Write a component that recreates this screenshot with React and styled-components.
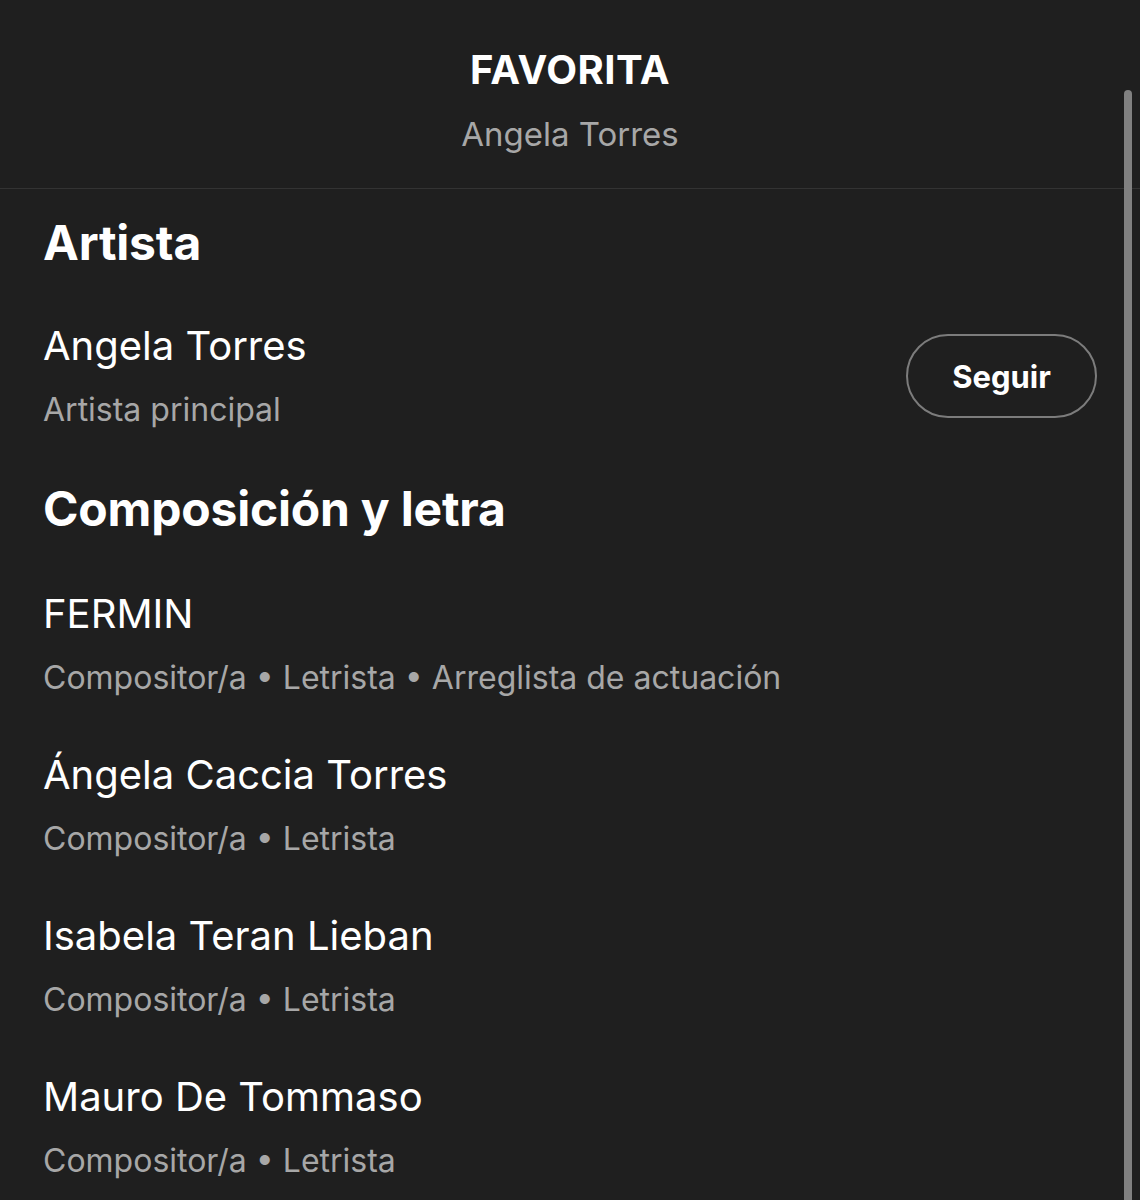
import React from "react";
import styled, { createGlobalStyle } from "styled-components";

const GlobalStyle = createGlobalStyle`
  body {
    margin: 0;
    background: #1f1f1f;
    font-family: Inter, "Noto Sans", sans-serif;
    color: #ffffff;
  }
`;

const Page = styled.div`
  position: relative;
  min-height: 1200px;
  background: #1f1f1f;
  overflow: hidden;
`;

const Header = styled.header`
  display: flex;
  flex-direction: column;
  align-items: center;
  padding: 46px 0 34px;
  border-bottom: 1px solid #333333;
`;

const Title = styled.h1`
  margin: 0;
  font-size: 40px;
  line-height: 48px;
  font-weight: 700;
  letter-spacing: 0.5px;
`;

const Subtitle = styled.div`
  margin-top: 20px;
  font-size: 33px;
  line-height: 40px;
  color: #a7a7a7;
`;

const Content = styled.main`
  display: flex;
  flex-direction: column;
  padding: 25px 43px 0;
`;

const SectionTitle = styled.h2`
  margin: 0 0 ${(p) => p.$gap}px;
  font-size: 48px;
  line-height: 58px;
  font-weight: 700;
  letter-spacing: -0.2px;
`;

const List = styled.div`
  display: flex;
  flex-direction: column;
  gap: 53px;
  margin-bottom: 50px;
`;

const Row = styled.div`
  display: flex;
  align-items: center;
  justify-content: space-between;
`;

const Info = styled.div`
  display: flex;
  flex-direction: column;
  gap: 20px;
`;

const Name = styled.div`
  font-size: 40px;
  line-height: 48px;
`;

const Roles = styled.div`
  font-size: 32px;
  line-height: 40px;
  color: #a7a7a7;
`;

const FollowButton = styled.button`
  width: 191px;
  height: 84px;
  border: 2px solid #7c7c7c;
  border-radius: 42px;
  background: transparent;
  color: #ffffff;
  font-family: inherit;
  font-size: 31px;
  font-weight: 700;
`;

const Scrollbar = styled.div`
  position: absolute;
  top: 90px;
  right: 8px;
  bottom: 0;
  width: 8px;
  border-radius: 4px 4px 0 0;
  background: #808080;
`;

const credits = [
  { name: "FERMIN", roles: "Compositor/a • Letrista • Arreglista de actuación" },
  { name: "Ángela Caccia Torres", roles: "Compositor/a • Letrista" },
  { name: "Isabela Teran Lieban", roles: "Compositor/a • Letrista" },
  { name: "Mauro De Tommaso", roles: "Compositor/a • Letrista" },
];

function App() {
  return (
    <Page>
      <GlobalStyle />
      <Header>
        <Title>FAVORITA</Title>
        <Subtitle>Angela Torres</Subtitle>
      </Header>
      <Content>
        <SectionTitle $gap={50}>Artista</SectionTitle>
        <List>
          <Row>
            <Info>
              <Name>Angela Torres</Name>
              <Roles>Artista principal</Roles>
            </Info>
            <FollowButton>Seguir</FollowButton>
          </Row>
        </List>
        <SectionTitle $gap={52}>Composición y letra</SectionTitle>
        <List>
          {credits.map((c) => (
            <Row key={c.name}>
              <Info>
                <Name>{c.name}</Name>
                <Roles>{c.roles}</Roles>
              </Info>
            </Row>
          ))}
        </List>
      </Content>
      <Scrollbar />
    </Page>
  );
}

export default App;
